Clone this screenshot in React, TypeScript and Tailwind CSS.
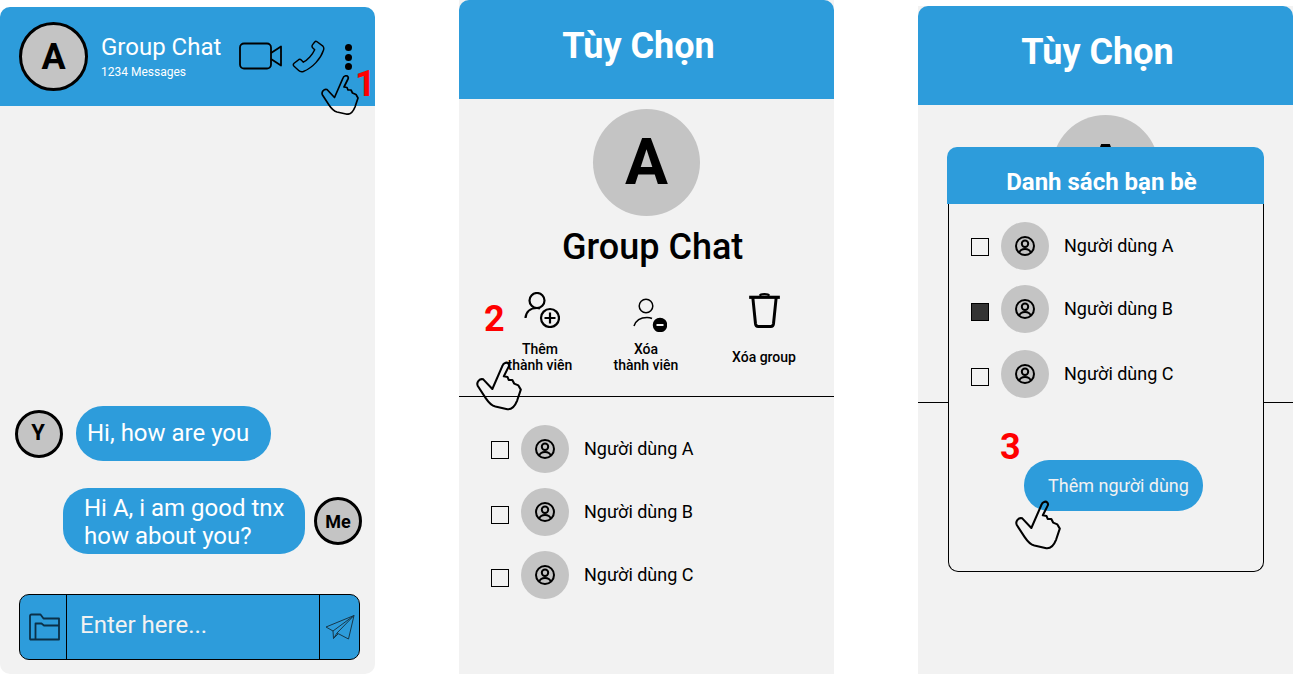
import React from 'react';

const Hand = ({ className }: { className: string }) => (
  <svg viewBox="0 0 38 40" fill="none" stroke="#000" strokeWidth="1.7" strokeLinejoin="round" className={className}>
    <path d="M24 1C26 0 28 2 27 4L23 12L26 12.5L27 15L30 15L31.5 18L35 19.5L37 23L34 32C32 37 29 40 25 39L16 37C12 36 10 33 8 30L1.5 20C0 17 3 13.5 6 14.5L13.5 22.5L22 3C22.3 2 23 1.300 24 1Z" />
  </svg>
);

const Step = ({ n, className }: { n: string; className: string }) => (
  <span className={`absolute text-[36px] leading-[42px] font-bold text-[#FF0000] ${className}`}>{n}</span>
);

const Bubble = ({ text, className }: { text: React.ReactNode; className: string }) => (
  <div className={`bg-[#2D9CDB] text-white text-[24px] leading-[28px] ${className}`}>{text}</div>
);

const SmallAvatar = ({ label, size }: { label: string; size: string }) => (
  <div className={`w-12 h-12 shrink-0 rounded-full bg-[#C4C4C4] border-[3px] border-black flex items-center justify-center font-bold text-black ${size}`}>
    {label}
  </div>
);

const ChatScreen = () => (
  <div className="relative w-[375px] h-[667px] mt-[7px] bg-[#F2F2F2] rounded-[10px] flex flex-col">
    {/* Header */}
    <div className="h-[99px] shrink-0 bg-[#2D9CDB] rounded-t-[10px] flex items-center pl-[19px]">
      <div className="w-[69px] h-[69px] rounded-full bg-[#C4C4C4] border-[3px] border-black flex items-center justify-center text-[36px] font-bold text-black">
        A
      </div>
      <div className="ml-[13px] w-[138px] text-white">
        <div className="text-[24px] leading-[28px] -mt-[1px]">Group Chat</div>
        <div className="text-[12px] leading-[14px] mt-[4px]">1234 Messages</div>
      </div>
      <svg viewBox="0 0 44 28" fill="none" stroke="#000" strokeWidth="1.8" strokeLinejoin="round" className="w-[44px] h-[28px] mb-[2px]">
        <rect x="1" y="1.500" width="31" height="25" rx="4" />
        <path d="M32 11L42 4.500V23.500L32 17" />
      </svg>
      <svg viewBox="0 0 32 32" fill="none" stroke="#000" strokeWidth="1.4" strokeLinejoin="round" className="w-[33px] h-[33px] ml-[9px] mb-[1px]">
        <path d="M24 1.500L30 6C31 7 31 8.500 30.500 10C28 18 20 27 11 30.500C9 31 7.500 30.500 6.500 29.500L2 25.500C1 24.500 1 23.500 2 22.500L6 19.500C7 18.500 8 18.500 9 19.500L11 21.500C15 19.500 20 14 22 9.500L20 7.500C19.200 6.500 19.200 5.500 20 4.500L22 2C22.500 1.300 23.300 1 24 1.500Z" />
      </svg>
      <div className="ml-[20px] mt-[1px] flex flex-col gap-[2.5px]">
        <span className="w-[7px] h-[7px] rounded-full bg-black" />
        <span className="w-[7px] h-[7px] rounded-full bg-black" />
        <span className="w-[7px] h-[7px] rounded-full bg-black" />
      </div>
    </div>

    {/* Messages */}
    <div className="flex-1 flex flex-col justify-end">
      <div className="flex items-center pl-[15px]">
        <SmallAvatar label="Y" size="text-[22px] pb-[2px] pr-[2px]" />
        <Bubble text="Hi, how are you" className="ml-[13px] w-[195px] h-[55px] rounded-[27px] pl-[11px] pb-[2px] flex items-center" />
      </div>
      <div className="flex items-center pl-[63px] mt-[27px]">
        <Bubble
          text={
            <>
              Hi A, i am good tnx
              <br />
              how about you?
            </>
          }
          className="w-[242px] h-[66px] rounded-[25px] pl-[21px] pt-[6px]"
        />
        <SmallAvatar label="Me" size="text-[18px] ml-[9px]" />
      </div>
      {/* Input */}
      <div className="mt-[40px] mb-[14px] mx-[19px] w-[341px] h-[66px] bg-[#2D9CDB] border border-black rounded-[10px] flex items-center">
        <div className="w-[47px] h-full flex items-center justify-center border-r border-black">
          <svg viewBox="0 0 32 28" fill="none" stroke="#0B3048" strokeWidth="1.800" strokeLinejoin="round" className="w-[33px] h-[28px] ml-[3px]">
            <path d="M1.500 26V3C1.500 2 2 1.500 3 1.500H12L15 5.500H30.500V26.500H2Z" />
            <path d="M7 26V10.500H13L15.500 12.500H30.500" />
          </svg>
        </div>
        <div className="flex-1 h-full flex items-center pl-[13px] pb-[4px] text-[24px] text-[#F2F2F2]">Enter here...</div>
        <div className="w-[40px] h-full flex items-center justify-center border-l border-black">
          <svg viewBox="0 0 30 26" fill="none" stroke="#17384A" strokeWidth="1" strokeLinejoin="round" className="w-[30px] h-[26px]">
            <path d="M1 13L29 1.500L23.500 25L12 19L8.500 24.500L8 17Z" />
            <path d="M8 17L29 1.500L12 19" />
            <path d="M8.500 24.500L13 20" />
          </svg>
        </div>
      </div>
    </div>

    <Hand className="absolute left-[321px] top-[68px] w-[38px] h-[40px]" />
    <Step n="1" className="left-[355px] top-[56px]" />
  </div>
);

const UserIcon = () => (
  <svg viewBox="0 0 24 24" fill="none" stroke="#000" strokeWidth="2" className="w-[24px] h-[24px] -mt-[1px]">
    <circle cx="12" cy="12" r="9" />
    <circle cx="12" cy="9.800" r="3.200" />
    <path d="M6 19C7 16 9.500 15 12 15C14.500 15 17 16 18 19" />
  </svg>
);

const UserRow = ({ name, checked, boxClass = 'mt-[2px]' }: { name: string; checked?: boolean; boxClass?: string }) => (
  <div className="flex items-center h-12">
    <div className={`w-[18px] h-[18px] border border-black ${boxClass} ${checked ? 'bg-[#333333]' : ''}`} />
    <div className="w-12 h-12 ml-[12px] rounded-full bg-[#C4C4C4] flex items-center justify-center">
      <UserIcon />
    </div>
    <span className="ml-[15px] pb-[2px] text-[18px] text-black">{name}</span>
  </div>
);

const Action = ({ icon, label, className }: { icon: React.ReactNode; label: React.ReactNode; className: string }) => (
  <div className={`flex flex-col items-center ${className}`}>
    <div className="h-[44px] flex items-center justify-center">{icon}</div>
    <div className="h-[32px] mt-[7px] flex items-center text-center text-[14px] leading-[16px] font-medium text-black whitespace-nowrap">
      {label}
    </div>
  </div>
);

const OptionHeader = () => (
  <div className="h-[99px] shrink-0 bg-[#2D9CDB] flex items-center justify-center pr-[16px] pb-[8px] rounded-t-[10px] text-white text-[36px] font-bold">
    Tùy Chọn
  </div>
);

const OptionsScreen = () => (
  <div className="relative w-[375px] h-[674px] bg-[#F2F2F2] flex flex-col">
    <OptionHeader />
    <div className="w-[107px] h-[107px] mt-[10px] ml-[134px] rounded-full bg-[#C4C4C4] flex items-center justify-center text-[64px] font-bold text-black">
      A
    </div>
    <div className="mt-[10px] ml-[103px] text-[36px] leading-[42px] font-medium text-black">Group Chat</div>

    <div className="flex pl-[28px] mt-[22px]">
      <Action
        className="w-[106px]"
        label={
          <>
            Thêm
            <br />
            thành viên
          </>
        }
        icon={
          <svg viewBox="0 0 36 36" fill="none" stroke="#000" strokeWidth="2.200" className="w-[36px] h-[36px] -mt-[4px] ml-[3px]">
            <circle cx="13" cy="8.500" r="7.500" />
            <path d="M1.500 26C2 20 6 16 13 16C14 16 15 16.200 16 16.500" />
            <circle cx="26" cy="26" r="9" />
            <path d="M26 20.500V31.500M20.500 26H31.500" />
          </svg>
        }
      />
      <Action
        className="w-[106px]"
        label={
          <>
            Xóa
            <br />
            thành viên
          </>
        }
        icon={
          <svg viewBox="0 0 34 34" fill="none" stroke="#000" strokeWidth="1.500" className="w-[34px] h-[34px] mt-[5px] ml-[8px]">
            <circle cx="13" cy="8" r="6.800" />
            <path d="M1 28C3 22 8 19.500 14 19.500C16 19.500 18 20 19 20.500" />
            <circle cx="27" cy="27" r="6.500" fill="#000" />
            <path d="M23.500 27H30.500" stroke="#F2F2F2" strokeWidth="2" />
          </svg>
        }
      />
      <Action
        className="w-[130px]"
        label="Xóa group"
        icon={
          <svg viewBox="0 0 31 34" fill="none" stroke="#000" strokeWidth="2.800" strokeLinejoin="round" className="w-[33px] h-[36px] -mt-[5px]">
            <path d="M1 5H30" strokeWidth="3" />
            <path d="M11 3.500C12 1.500 19 1.500 20 3.500" strokeWidth="2" />
            <path d="M4.500 5.500L7 30C7.200 31.500 8 32.500 9.500 32.500H21.500C23 32.500 23.800 31.500 24 30L26.500 5.500" />
          </svg>
        }
      />
    </div>

    <div className="mt-[23px] h-px bg-black" />

    <div className="mt-[28px] ml-[32px] flex flex-col gap-[15px]">
      <UserRow name="Người dùng A" />
      <UserRow name="Người dùng B" boxClass="mt-[6px]" />
      <UserRow name="Người dùng C" boxClass="mt-[6px]" />
    </div>

    <Hand className="absolute left-[17px] top-[360px] w-[46px] h-[52px]" />
    <Step n="2" className="left-[25px] top-[298px]" />
  </div>
);

const FriendsScreen = () => (
  <div className="relative w-[375px] h-[668px] mt-[6px] bg-[#F2F2F2] flex flex-col">
    <OptionHeader />
    <div className="w-[107px] h-[107px] mt-[10px] ml-[134px] rounded-full bg-[#C4C4C4] flex items-center justify-center text-[64px] font-bold text-black">
      A
    </div>
    <div className="mt-[180px] h-px bg-black" />

    {/* Modal */}
    <div className="absolute left-[29px] top-[141px] w-[317px] h-[425px] flex flex-col">
      <div className="h-[57px] shrink-0 bg-[#2D9CDB] rounded-t-[10px] flex items-end justify-center pb-[8px] pr-[8px] text-white text-[24px] leading-[28px] font-bold">
        Danh sách bạn bè
      </div>
      <div className="flex-1 ml-px bg-[#F2F2F2] border border-t-0 border-black rounded-b-[10px] pl-[22px] pt-[18px]">
        <UserRow name="Người dùng A" />
        <div className="mt-[15px]">
          <UserRow name="Người dùng B" boxClass="mt-[6px]" checked />
        </div>
        <div className="mt-[17px]">
          <UserRow name="Người dùng C" boxClass="mt-[6px]" />
        </div>
        <div className="mt-[62px] ml-[53px] w-[179px] h-[51px] rounded-[25px] bg-[#2D9CDB] flex items-center pl-[24px] text-[18px] text-[#F2F2F2]">
          Thêm người dùng
        </div>
      </div>
      <Step n="3" className="left-[53px] top-[279px]" />
      <Hand className="absolute left-[68px] top-[353px] w-[46px] h-[50px]" />
    </div>
  </div>
);

export default function App() {
  return (
    <div className="w-[1293px] h-[674px] overflow-hidden bg-white flex gap-[84px] font-['Roboto',sans-serif]">
      <ChatScreen />
      <OptionsScreen />
      <FriendsScreen />
    </div>
  );
}
